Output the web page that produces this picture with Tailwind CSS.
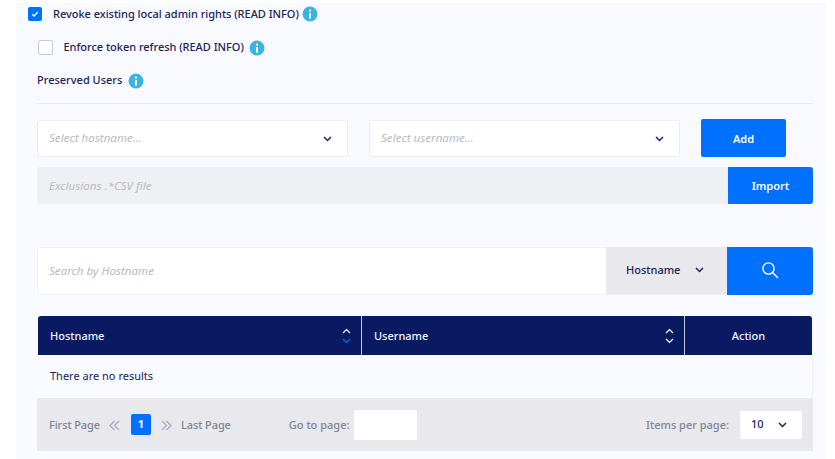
<!DOCTYPE html>
<html lang="en">
<head>
    <meta charset="UTF-8">
    <title>Preserved Users</title>
    <script src="https://cdn.jsdelivr.net/npm/@tailwindcss/browser@4"></script>
</head>
<body class="bg-white h-[459px] overflow-hidden font-['Noto_Sans',sans-serif] text-[11px] font-medium text-[#1d2259]">
    <div class="ml-4 mt-[3px] w-[810px] h-[456px] bg-[#f8faff] pl-[21px] pr-[13px] overflow-hidden">
        <!-- Revoke -->
        <div class="flex items-center h-[14px] mt-1 -ml-[9px]">
            <span class="w-[14px] h-[14px] rounded-[2px] bg-[#0071fe] flex items-center justify-center">
                <svg width="8" height="8" viewBox="0 0 8 8" fill="none" stroke="#fff" stroke-width="1.3"><path d="M1.2 4.2 3.2 6 6.8 2"/></svg>
            </span>
            <span class="ml-[11px] w-[246px] whitespace-nowrap tracking-[-0.03px]">Revoke existing local admin rights (READ INFO)</span>
            <svg class="ml-[3px]" width="16" height="16" viewBox="0 0 16 16"><circle cx="8" cy="8" r="7.5" fill="#3cb4e0"/><rect x="7" y="7" width="2" height="5.5" fill="#fff"/><rect x="7" y="3.6" width="2" height="2" fill="#fff"/></svg>
        </div>
        <!-- Enforce -->
        <div class="flex items-center h-[15px] mt-[19px] ml-px">
            <span class="w-[15px] h-[15px] rounded-[2px] bg-white border border-[#c9cad3]"></span>
            <span class="ml-[10.5px] w-[182px] whitespace-nowrap tracking-[-0.03px]">Enforce token refresh (READ INFO)</span>
            <svg class="ml-[3px]" width="16" height="16" viewBox="0 0 16 16"><circle cx="8" cy="8" r="7.5" fill="#3cb4e0"/><rect x="7" y="7" width="2" height="5.5" fill="#fff"/><rect x="7" y="3.6" width="2" height="2" fill="#fff"/></svg>
        </div>
        <!-- Preserved Users -->
        <div class="flex items-center h-[16px] mt-[18px]">
            <span class="-mt-[2px]">Preserved Users</span>
            <svg class="ml-[6px]" width="16" height="16" viewBox="0 0 16 16"><circle cx="8" cy="8" r="7.5" fill="#3cb4e0"/><rect x="7" y="7" width="2" height="5.5" fill="#fff"/><rect x="7" y="3.6" width="2" height="2" fill="#fff"/></svg>
        </div>
        <div class="h-px bg-[#e9ebf1] mt-[14px]"></div>
        <!-- Selects -->
        <div class="flex items-start mt-[15px]">
            <div class="w-[311px] h-[37px] mt-px bg-white border border-[#ebedf2] rounded-[3px] flex items-center justify-between pl-[11px] pr-[15px] italic font-normal text-[11.6px] text-[#b9bac4]">
                <span class="-mt-px">Select hostname...</span>
                <svg width="9" height="6" viewBox="0 0 9 6" fill="none" stroke="#1d2259" stroke-width="1.5"><path d="M1 1l3.5 3.5L8 1"/></svg>
            </div>
            <div class="w-[311px] h-[37px] mt-px ml-[21px] bg-white border border-[#ebedf2] rounded-[3px] flex items-center justify-between pl-[11px] pr-[15px] italic font-normal text-[11.6px] text-[#b9bac4]">
                <span class="-mt-px">Select username...</span>
                <svg width="9" height="6" viewBox="0 0 9 6" fill="none" stroke="#1d2259" stroke-width="1.5"><path d="M1 1l3.5 3.5L8 1"/></svg>
            </div>
            <button class="w-[85px] h-[38px] pt-[2px] ml-[21px] bg-[#0071fe] rounded-[2px] text-white font-semibold">Add</button>
        </div>
        <!-- Import -->
        <div class="flex h-[37px] mt-[10px] bg-[#eff0f4] rounded-[3px]">
            <div class="flex-1 flex items-center pl-3 italic font-normal text-[11.6px] text-[#b9bac4]">Exclusions .*CSV file</div>
            <button class="w-[85px] pt-[1px] bg-[#0071fe] rounded-r-[3px] text-white font-semibold">Import</button>
        </div>
        <!-- Search -->
        <div class="flex h-[48px] mt-[43px] bg-white border border-[#f0f1f5] rounded-[3px]">
            <div class="flex-1 flex items-center pl-[11px] pb-px italic font-normal text-[11.6px] text-[#b9bac4]">Search by Hostname</div>
            <div class="w-[121px] bg-[#e9e8ed] flex items-center pl-5 pb-px -mt-px">
                <span>Hostname</span>
                <svg class="ml-[15px]" width="9" height="6" viewBox="0 0 9 6" fill="none" stroke="#1d2259" stroke-width="1.5"><path d="M1 1l3.5 3.5L8 1"/></svg>
            </div>
            <div class="w-[86px] -my-px -mr-px pb-[3px] bg-[#0071fe] rounded-r-[3px] flex items-center justify-center">
                <svg width="18" height="18" viewBox="0 0 18 18" fill="none" stroke="#fff" stroke-width="1.4"><circle cx="7.5" cy="7.5" r="5.6"/><path d="M11.6 11.6 17 17"/></svg>
            </div>
        </div>
        <!-- Table -->
        <div class="mt-[21px]">
            <div class="flex h-[39px] mx-px bg-[#0a1a62] rounded-t-[3px] text-[#f1f3fb]">
                <div class="w-[324px] flex items-center justify-between pl-3 pr-[10px] border-r border-[#c4c8d8]">
                    <span class="pt-[2px]">Hostname</span>
                    <svg width="9" height="16" viewBox="0 0 9 16" fill="none" stroke-width="1.2"><path stroke="#fff" d="M1 5l3.5-3.5L8 5"/><path stroke="#0071fe" d="M1 11l3.5 3.5L8 11"/></svg>
                </div>
                <div class="w-[323px] flex items-center justify-between pl-3 pr-[10px] border-r border-[#c4c8d8]">
                    <span class="pt-[2px]">Username</span>
                    <svg width="9" height="16" viewBox="0 0 9 16" fill="none" stroke="#fff" stroke-width="1.2"><path d="M1 5l3.5-3.5L8 5"/><path d="M1 11l3.5 3.5L8 11"/></svg>
                </div>
                <div class="flex-1 flex items-center justify-center pt-[2px]">Action</div>
            </div>
            <div class="h-[43px] flex items-center pl-3 font-normal ml-px border-r border-[#f0f1f5]">There are no results</div>
            <!-- Pagination -->
            <div class="h-[53px] pt-px bg-[#e9e8ed] flex items-center pl-3 pr-[11px] text-[#7f8498]">
                <span class="w-[52px] tracking-[-0.1px] whitespace-nowrap">First Page</span>
                <svg class="ml-[8px]" width="11" height="11" viewBox="0 0 11 11" fill="none" stroke="#a3abbf" stroke-width="1.2"><path d="M5.5 1 1 5.5 5.5 10M10 1 5.5 5.5 10 10"/></svg>
                <span class="w-5 h-[21px] -mt-px ml-[11px] bg-[#0071fe] rounded-[2px] text-white font-bold flex items-center justify-center">1</span>
                <svg class="ml-[10px]" width="11" height="11" viewBox="0 0 11 11" fill="none" stroke="#a3abbf" stroke-width="1.2"><path d="M1 1l4.5 4.5L1 10M5.5 1 10 5.5 5.5 10"/></svg>
                <span class="ml-[9px] tracking-[-0.1px]">Last Page</span>
                <span class="ml-[58px]">Go to page:</span>
                <span class="w-[63px] h-[30px] -mt-px ml-[5px] bg-white"></span>
                <span class="ml-auto">Items per page:</span>
                <div class="w-[62px] h-[28px] -mt-px ml-[11px] bg-white rounded-[2px] flex items-center pl-[11px] text-[#1d2259]">
                    <span>10</span>
                    <svg class="ml-[14px]" width="9" height="6" viewBox="0 0 9 6" fill="none" stroke="#1d2259" stroke-width="1.5"><path d="M1 1l3.5 3.5L8 1"/></svg>
                </div>
            </div>
        </div>
    </div>
</body>
</html>
